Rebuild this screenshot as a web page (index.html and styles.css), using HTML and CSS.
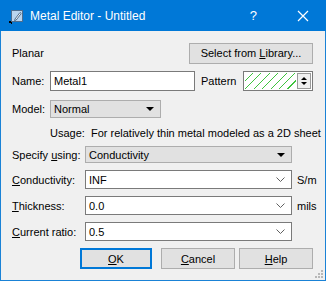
FILE: index.html
```html
<!DOCTYPE html>
<html lang="en">
<head>
  <meta charset="UTF-8">
  <meta name="viewport" content="width=device-width, initial-scale=1.0">
  <title>Metal Editor - Untitled</title>
  <link rel="stylesheet" href="styles.css">
</head>
<body>
  <div class="window">
    <!-- Title bar -->
    <div class="titlebar">
      <svg class="app-icon" width="14" height="14" viewBox="0 0 14 14">
        <rect x="2.5" y="0.5" width="11" height="11" fill="#b9d4ee" stroke="#4d6d8f"/>
        <path d="M6 9 L11 2.5 L12.2 3.5 L7.2 10 L5.6 10.6 Z" fill="#ffffff" stroke="#2d4d6f" stroke-width="0.8"/>
        <rect x="0" y="11" width="2" height="2" fill="#000"/>
        <rect x="2" y="12" width="1" height="2" fill="#000"/>
      </svg>
      <span class="title">Metal Editor - Untitled</span>
      <span class="title-help">?</span>
      <svg class="title-close" width="12" height="12" viewBox="0 0 12 12">
        <path d="M1 1 L11 11 M11 1 L1 11" stroke="#fff" stroke-width="1.2"/>
      </svg>
    </div>

    <div class="client">
      <div class="row row-top">
        <span>Planar</span>
        <button class="btn btn-library">Select from <u>L</u>ibrary...</button>
      </div>

      <div class="row row-name">
        <label class="lbl-short" for="name">Name:</label>
        <input type="text" id="name" class="text-input name-input" value="Metal1">
        <span class="pattern-label">Pattern</span>
        <div class="pattern-box">
          <div class="hatch"></div>
          <div class="spin">
            <span class="spin-up"></span>
            <span class="spin-down"></span>
          </div>
        </div>
      </div>

      <div class="row row-model">
        <span class="lbl-short">Model:</span>
        <div class="dropdown model-dropdown">
          <span>Normal</span>
          <span class="tri"></span>
        </div>
      </div>

      <div class="row row-usage">
        <span>Usage:&nbsp; For relatively thin metal modeled as a 2D sheet</span>
      </div>

      <div class="grid">
        <span class="lbl">Specify <u>u</u>sing:</span>
        <div class="dropdown">
          <span>Conductivity</span>
          <span class="tri"></span>
        </div>
        <span></span>

        <span class="lbl"><u>C</u>onductivity:</span>
        <div class="combo">
          <span>INF</span>
          <svg class="chev" width="9" height="5" viewBox="0 0 9 5"><path d="M0.5 0.5 L4.5 4.5 L8.5 0.5" fill="none" stroke="#606060"/></svg>
        </div>
        <span class="unit">S/m</span>

        <span class="lbl"><u>T</u>hickness:</span>
        <div class="combo">
          <span>0.0</span>
          <svg class="chev" width="9" height="5" viewBox="0 0 9 5"><path d="M0.5 0.5 L4.5 4.5 L8.5 0.5" fill="none" stroke="#606060"/></svg>
        </div>
        <span class="unit">mils</span>

        <span class="lbl"><u>C</u>urrent ratio:</span>
        <div class="combo">
          <span>0.5</span>
          <svg class="chev" width="9" height="5" viewBox="0 0 9 5"><path d="M0.5 0.5 L4.5 4.5 L8.5 0.5" fill="none" stroke="#606060"/></svg>
        </div>
        <span></span>
      </div>

      <div class="buttons">
        <button class="btn btn-ok"><u>O</u>K</button>
        <button class="btn btn-cancel"><u>C</u>ancel</button>
        <button class="btn btn-help"><u>H</u>elp</button>
      </div>

      <svg class="grip" width="9" height="9" viewBox="0 0 9 9">
        <rect x="6" y="0" width="2" height="2" fill="#b8b8b8"/>
        <rect x="3" y="3" width="2" height="2" fill="#b8b8b8"/>
        <rect x="6" y="3" width="2" height="2" fill="#b8b8b8"/>
        <rect x="0" y="6" width="2" height="2" fill="#b8b8b8"/>
        <rect x="3" y="6" width="2" height="2" fill="#b8b8b8"/>
        <rect x="6" y="6" width="2" height="2" fill="#b8b8b8"/>
      </svg>
    </div>
  </div>
</body>
</html>
```

FILE: styles.css
```css
body {
  margin: 0;
  font-family: "Liberation Sans", Arial, sans-serif;
  font-size: 11px;
  color: #000;
  background: #ffffff;
  white-space: nowrap;
}

.window {
  width: 326px;
  height: 281px;
  box-sizing: border-box;
  border: 1px solid #1a82d6;
  border-top: none;
  display: flex;
  flex-direction: column;
}

.titlebar {
  height: 31px;
  margin: 0 -1px;
  background: #0078d7;
  color: #fff;
  display: flex;
  align-items: center;
  flex-shrink: 0;
}

.app-icon {
  margin-left: 9px;
  margin-top: 2px;
}

.title {
  margin-left: 7px;
  font-size: 12px;
}

.title-help {
  margin-left: auto;
  font-size: 13px;
}

.title-close {
  margin-left: 40px;
  margin-right: 17px;
}

.client {
  flex: 1;
  background: #f0f0f0;
  padding: 0 12px 0 11px;
  position: relative;
}

.row {
  display: flex;
  align-items: center;
}

.row-top {
  justify-content: space-between;
  margin-top: 11px;
  height: 22px;
}

.btn {
  font-family: inherit;
  font-size: 11px;
  color: #000;
  background: #e1e1e1;
  border: 1px solid #adadad;
  padding: 0;
  height: 21px;
}

.btn-library {
  width: 124px;
}

.row-name {
  margin-top: 7px;
  height: 20px;
}

.lbl-short {
  width: 38px;
  flex-shrink: 0;
}

.text-input {
  font-family: inherit;
  font-size: 11px;
  box-sizing: border-box;
  height: 20px;
  border: 1px solid #7a7a7a;
  background: #fff;
  padding: 0 3px;
  margin: 0;
  outline: none;
}

.name-input {
  width: 145px;
}

.pattern-label {
  margin-left: 6px;
  width: 42px;
}

.pattern-box {
  width: 71px;
  height: 20px;
  box-sizing: border-box;
  border: 1px solid #7a7a7a;
  background: #fff;
  display: flex;
}

.hatch {
  flex: 1;
  margin: 1px;
  background: repeating-linear-gradient(135deg, transparent 0 5px, #3fc43f 5px 6px);
}

.spin {
  width: 14px;
  margin: 1px 1px 1px 0;
  border: 1px solid #9a9a9a;
  box-sizing: border-box;
  display: flex;
  flex-direction: column;
  align-items: center;
  justify-content: center;
  gap: 2px;
  background: #f0f0f0;
}

.spin-up {
  border-left: 3px solid transparent;
  border-right: 3px solid transparent;
  border-bottom: 3px solid #000;
}

.spin-down {
  border-left: 3px solid transparent;
  border-right: 3px solid transparent;
  border-top: 3px solid #000;
}

.row-model {
  margin-top: 9px;
  height: 18px;
}

.dropdown {
  box-sizing: border-box;
  height: 100%;
  background: #e1e1e1;
  border: 1px solid #adadad;
  display: flex;
  align-items: center;
  justify-content: space-between;
  padding: 0 6px 0 3px;
}

.model-dropdown {
  width: 111px;
}

.tri {
  border-left: 4px solid transparent;
  border-right: 4px solid transparent;
  border-top: 4px solid #000;
}

.row-usage {
  margin-top: 7px;
  height: 16px;
  padding-left: 38px;
}

.grid {
  margin-top: 5px;
  display: grid;
  grid-template-columns: 73px 207px auto;
  grid-template-rows: 17px 19px 19px 19px;
  row-gap: 7px;
  align-items: center;
}

.grid .dropdown {
  height: 17px;
}

.combo {
  box-sizing: border-box;
  height: 19px;
  background: #fff;
  border: 1px solid #7a7a7a;
  display: flex;
  align-items: center;
  justify-content: space-between;
  padding: 0 6px 0 3px;
}

.chev {
  display: block;
}

.unit {
  margin-left: 5px;
}

.buttons {
  margin-top: 7px;
  display: flex;
  justify-content: flex-end;
  gap: 4px;
}

.btn-ok {
  width: 72px;
  border: 2px solid #0078d7;
  margin-right: 5px;
}

.btn-cancel,
.btn-help {
  width: 74px;
}

.grip {
  position: absolute;
  right: 1px;
  bottom: 1px;
}
```
